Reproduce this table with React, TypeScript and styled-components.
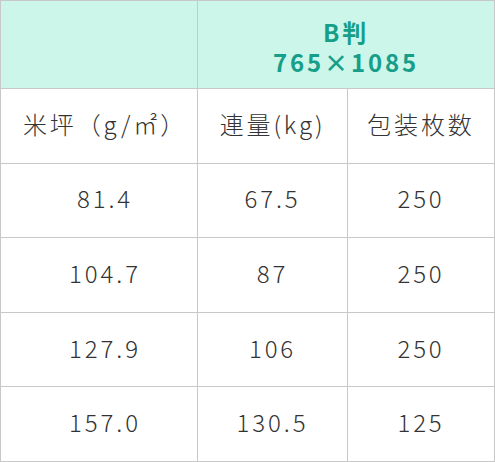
import React from 'react';
import styled, { createGlobalStyle } from 'styled-components';

const GlobalStyle = createGlobalStyle`
  html, body {
    margin: 0;
    padding: 0;
    background: #ffffff;
  }
  body {
    font-family: 'Noto Sans CJK JP', 'Noto Sans', sans-serif;
  }
`;

const rows = [
  ['81.4', '67.5', '250'],
  ['104.7', '87', '250'],
  ['127.9', '106', '250'],
  ['157.0', '130.5', '125'],
];

export default function App() {
  return (
    <>
      <GlobalStyle />
      <Table>
        <colgroup>
          <col style={{ width: 197 }} />
          <col style={{ width: 150 }} />
          <col />
        </colgroup>
        <thead>
          <tr>
            <HeadCell />
            <HeadCell colSpan={2}>
              <HeadText>
                <div>B判</div>
                <div>765×1085</div>
              </HeadText>
            </HeadCell>
          </tr>
        </thead>
        <tbody>
          <Row>
            <Cell $first>米坪（g/㎡）</Cell>
            <Cell>連量(kg)</Cell>
            <Cell>包装枚数</Cell>
          </Row>
          {rows.map((r, i) => (
            <Row key={i}>
              {r.map((v, j) => (
                <Cell key={j} $first={j === 0}>
                  {v}
                </Cell>
              ))}
            </Row>
          ))}
        </tbody>
      </Table>
    </>
  );
}

const Table = styled.table`
  width: 495px;
  border-collapse: collapse;
  table-layout: fixed;
`;

const HeadCell = styled.th`
  height: 87px;
  padding: 0;
  background: #ccf6ea;
  border: 1px solid #c8c8c8;
  color: #169e89;
  font-weight: 700;
  font-size: 24px;
  line-height: 30px;
  letter-spacing: 0.12em;
  text-align: center;
  vertical-align: middle;
`;

const HeadText = styled.div`
  padding-top: 5px;
`;

const Row = styled.tr`
  height: 74.6px;
`;

const Cell = styled.td<{ $first?: boolean }>`
  padding: 0 0 5px ${(p) => (p.$first ? '12px' : '0')};
  border: 1px solid #c8c8c8;
  color: #333333;
  font-size: 24px;
  font-weight: 300;
  letter-spacing: 0.12em;
  text-align: center;
  vertical-align: middle;
`;
